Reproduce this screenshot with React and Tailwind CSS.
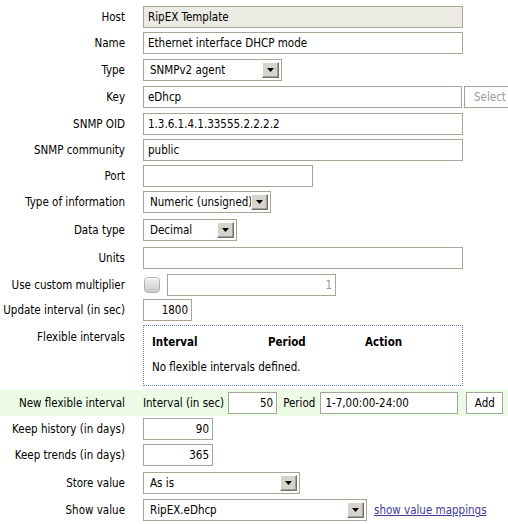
import React from "react";

const F = { fontFamily: '"DejaVu Sans Condensed", "DejaVu Sans", sans-serif' };

function Arrow() {
  return (
    <span className="flex h-[16px] w-[17px] shrink-0 items-center justify-center border border-t-white border-l-white border-r-[#6e6e6e] border-b-[#6e6e6e] bg-[#d6d3cc] shadow-[inset_-1px_-1px_0_#a0a0a0]">
      <svg width="7" height="4" viewBox="0 0 7 4">
        <path d="M0 0h7L3.5 4z" fill="#000" />
      </svg>
    </span>
  );
}

function Select({ w, value }) {
  return (
    <div className={`flex h-[22px] ${w} items-center justify-between overflow-hidden border border-[#a8a596] bg-white pl-[6px] pr-[2px]`}>
      <span className="overflow-hidden whitespace-nowrap pt-[2px]">{value}</span>
      <Arrow />
    </div>
  );
}

function Input({ w, value = "", right = false, bg = "bg-white", muted = false }) {
  return (
    <div
      className={`flex h-[22px] ${w} items-center whitespace-nowrap border border-[#a8a596] pt-[2px] ${bg} ${right ? "justify-end pr-[3px]" : "pl-[4px]"} ${muted ? "text-[#9a9a9a]" : ""}`}
    >
      {value}
    </div>
  );
}

function Row({ h, label, children }) {
  return (
    <div className={`flex ${h} items-start pt-[2px]`}>
      <div className="flex h-[22px] w-[125px] shrink-0 items-center justify-end whitespace-nowrap pt-[2px]">{label}</div>
      <div className="ml-[18px] flex items-center">{children}</div>
    </div>
  );
}

export default function App() {
  return (
    <div className="h-[524px] w-[508px] overflow-hidden whitespace-nowrap bg-white text-[11.5px] text-black" style={F}>
      <div className="pt-[4px]">
        <Row h="h-[26px]" label="Host">
          <Input w="w-[320px]" value="RipEX Template" bg="bg-[#ebebe4]" />
        </Row>
        <Row h="h-[27px]" label="Name">
          <Input w="w-[320px]" value="Ethernet interface DHCP mode" />
        </Row>
        <Row h="h-[27px]" label="Type">
          <Select w="w-[139px]" value="SNMPv2 agent" />
        </Row>
        <Row h="h-[27px]" label="Key">
          <Input w="w-[319px]" value="eDhcp" />
          <div className="ml-[2px] flex h-[22px] w-[50px] items-center border border-[#a8a596] bg-white pl-[9px] pt-[2px] text-[#9a9a9a]">
            Select
          </div>
        </Row>
        <Row h="h-[26px]" label="SNMP OID">
          <Input w="w-[320px]" value="1.3.6.1.4.1.33555.2.2.2.2" />
        </Row>
        <Row h="h-[26px]" label="SNMP community">
          <Input w="w-[320px]" value="public" />
        </Row>
        <Row h="h-[26px]" label="Port">
          <Input w="w-[170px]" />
        </Row>
        <Row h="h-[28px]" label="Type of information">
          <Select w="w-[128px]" value="Numeric (unsigned)" />
        </Row>
        <Row h="h-[28px]" label="Data type">
          <Select w="w-[94px]" value="Decimal" />
        </Row>
        <Row h="h-[27px]" label="Units">
          <Input w="w-[320px]" />
        </Row>
        <Row h="h-[25px]" label="Use custom multiplier">
          <span className="ml-[1px] h-[16px] w-[16px] rounded-[4px] border border-[#b4b4b4] bg-gradient-to-b from-[#f2f2f2] to-[#c8c8c8] shadow-[inset_0_1px_0_#fff]" />
          <div className="ml-[7px]">
            <Input w="w-[169px]" value="1" right muted />
          </div>
        </Row>
        <Row h="h-[26px]" label="Update interval (in sec)">
          <Input w="w-[49px]" value="1800" right />
        </Row>
        <div className="flex h-[65px] pt-[2px]">
          <div className="w-[125px] shrink-0 pt-[4px] text-right">Flexible intervals</div>
          <div className="ml-[18px] h-[61px] w-[320px] border border-dotted border-[#6f86bd] pl-[8px] pt-[8px]">
            <div className="flex font-bold">
              <span className="w-[116px]">Interval</span>
              <span className="w-[97px]">Period</span>
              <span>Action</span>
            </div>
            <div className="mt-[8px]">No flexible intervals defined.</div>
          </div>
        </div>
        <div className="mt-[2px] flex h-[26px] items-center bg-[#ebfbe6]">
          <div className="w-[125px] shrink-0 pt-[2px] text-right">New flexible interval</div>
          <div className="ml-[18px] flex items-center">
            <span className="pt-[2px]">Interval (in sec)</span>
            <div className="ml-[4px]">
              <Input w="w-[49px]" value="50" right />
            </div>
            <span className="ml-[6px] pt-[2px]">Period</span>
            <div className="ml-[5px]">
              <Input w="w-[138px]" value="1-7,00:00-24:00" />
            </div>
            <div className="ml-[8px] flex h-[22px] w-[37px] items-center justify-center border border-[#a8a596] bg-white pt-[2px]">
              Add
            </div>
          </div>
        </div>
        <Row h="h-[26px]" label="Keep history (in days)">
          <Input w="w-[70px]" value="90" right />
        </Row>
        <Row h="h-[28px]" label="Keep trends (in days)">
          <Input w="w-[70px]" value="365" right />
        </Row>
        <Row h="h-[27px]" label="Store value">
          <Select w="w-[157px]" value="As is" />
        </Row>
        <Row h="h-[26px]" label="Show value">
          <Select w="w-[224px]" value="RipEX.eDhcp" />
          <a className="ml-[7px] pt-[2px] text-[#3c3c9a] underline">show value mappings</a>
        </Row>
      </div>
    </div>
  );
}
